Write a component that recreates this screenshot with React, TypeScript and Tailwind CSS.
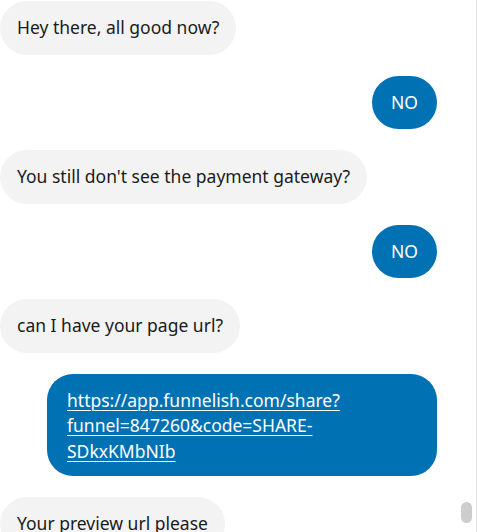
import React from "react";

type Msg = { id: number; from: "them" | "me"; text: string; link?: boolean };

const messages: Msg[] = [
  { id: 1, from: "them", text: "Hey there, all good now?" },
  { id: 2, from: "me", text: "NO" },
  { id: 3, from: "them", text: "You still don't see the payment gateway?" },
  { id: 4, from: "me", text: "NO" },
  { id: 5, from: "them", text: "can I have your page url?" },
  { id: 6, from: "me", text: "https://app.funnelish.com/share?funnel=847260&code=SHARE-SDkxKMbNIb", link: true },
  { id: 7, from: "them", text: "Your preview url please" },
];

function Bubble({ msg }: { msg: Msg }) {
  if (msg.from === "them") {
    return (
      <div className="flex justify-start">
        <div className="bg-[#f3f3f3] text-[#1b1b1b] rounded-[27px] px-[17px] py-[14px]">
          {msg.text}
        </div>
      </div>
    );
  }

  if (msg.link) {
    return (
      <div className="flex justify-end">
        <div className="w-[390px] bg-[#0072b4] rounded-[26px] px-[20px] pt-[14px] pb-[12px]">
          <a href="#" className="text-white underline underline-offset-[3px] decoration-1">
            https://app.funnelish.com/share?
            <br />
            funnel=847260&amp;code=SHARE-
            <br />
            SDkxKMbNIb
          </a>
        </div>
      </div>
    );
  }

  return (
    <div className="flex justify-end">
      <div className="bg-[#0072b4] text-white rounded-[27px] px-[19px] py-[14px]">{msg.text}</div>
    </div>
  );
}

export default function App() {
  return (
    <div className="flex h-[532px] w-[477px] overflow-hidden bg-white font-['Noto_Sans',sans-serif] text-[17.5px] leading-[25.5px]">
      <div className="flex-1 flex flex-col gap-[21px] pt-[1px] pr-[21px]">
        {messages.map((m) => (
          <Bubble key={m.id} msg={m} />
        ))}
      </div>
      <div className="w-[19px] border-r border-[#e3e3e3] flex flex-col justify-end pb-[9px] pl-[3px]">
        <div className="w-[11px] h-[21px] rounded-full bg-[#cdcdcd]" />
      </div>
    </div>
  );
}
